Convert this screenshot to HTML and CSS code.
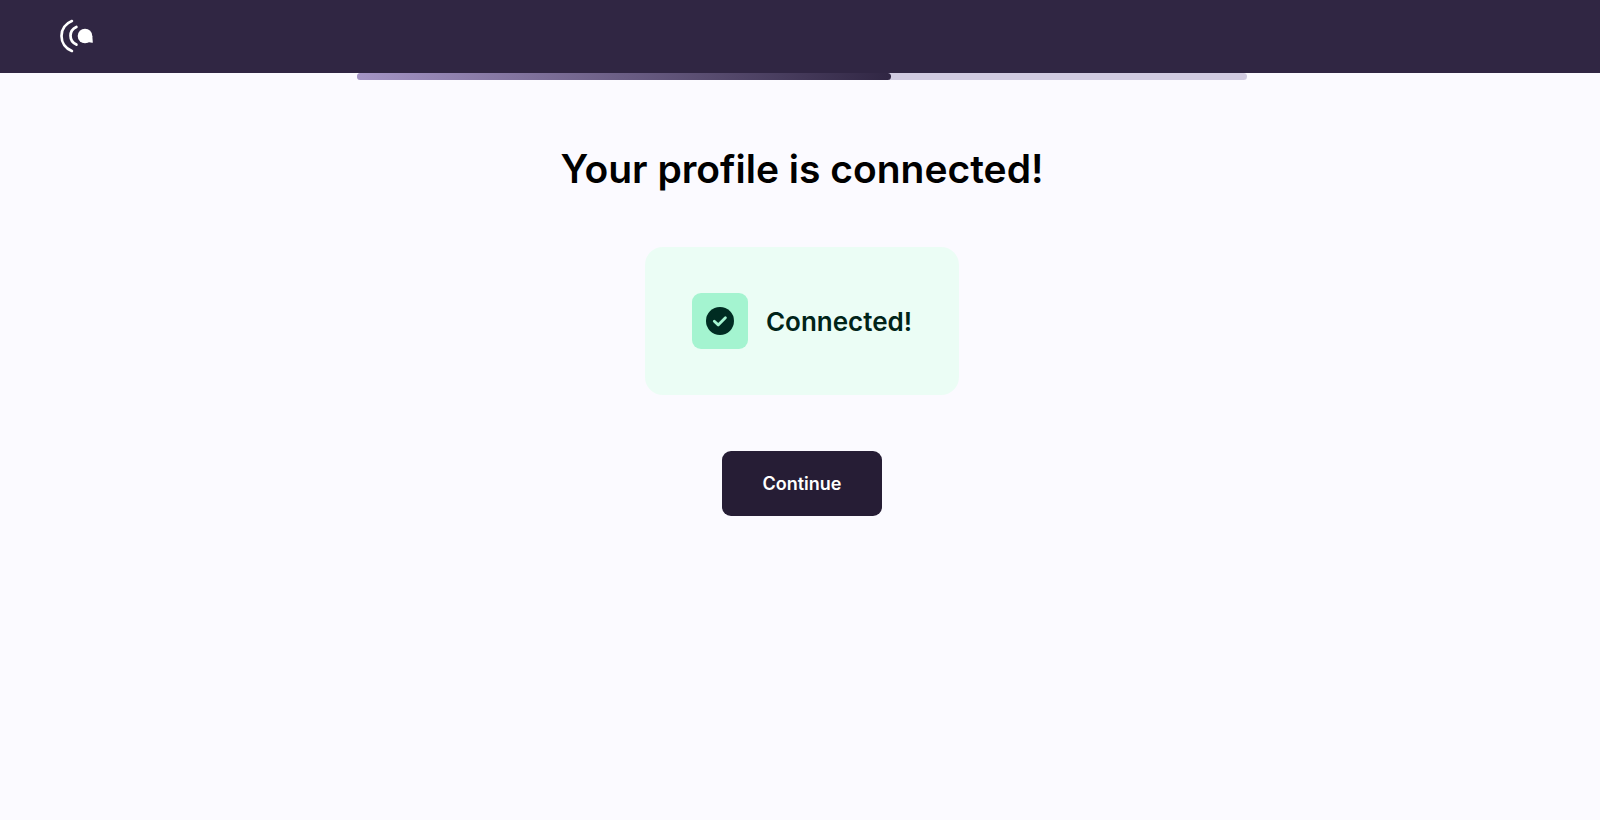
FILE: index.html
```html
<!DOCTYPE html>
<html lang="en">
<head>
<meta charset="utf-8">
<meta name="viewport" content="width=device-width, initial-scale=1">
<title>Your profile is connected!</title>
<link rel="stylesheet" href="styles.css">
</head>
<body>
<header class="topbar">
  <svg class="logo" viewBox="0 0 34 34" role="img" aria-label="Home">
    <path class="logo-wave" d="M11.900 2.100C5.600 4.500 1.500 10.200 1.500 17s4.100 12.500 10.400 14.900"/>
    <path class="logo-wave" d="M16.400 8C12.800 9.600 10.500 13 10.500 16.800s2.300 7.200 5.900 8.800"/>
    <circle class="logo-dot" cx="25" cy="17" r="7.300"/>
    <path class="logo-dot" d="M25 17h7.300l.5 6.300q0 .7-.700.500l-4.500-.900z"/>
  </svg>
</header>
<main class="page">
  <div class="progress" role="progressbar" aria-label="Setup progress" aria-valuemin="0" aria-valuemax="100" aria-valuenow="60">
    <div class="progress-fill" style="width: 60%"></div>
  </div>
  <h1 class="title">Your profile is connected!</h1>
  <section class="status">
    <span class="status-badge">
      <svg class="check" viewBox="0 0 28 28" aria-hidden="true">
        <circle class="check-disc" cx="14" cy="14" r="14"/>
        <path class="check-mark" d="M8.300 14.300l3.900 3.600 7.200-7.200"/>
      </svg>
    </span>
    <span class="status-text">Connected!</span>
  </section>
  <button class="continue" type="button">Continue</button>
</main>
</body>
</html>
```
FILE: styles.css
```css
* {
  box-sizing: border-box;
}

body {
  margin: 0;
  min-height: 100vh;
  background: #fbfaff;
  color: #000;
  font-family: Inter, "Liberation Sans", sans-serif;
}

.topbar {
  display: flex;
  align-items: center;
  height: 73px;
  padding: 0 60px 1px;
  background: #302643;
}

.logo {
  width: 34px;
  height: 34px;
}

.logo-wave {
  fill: none;
  stroke: #fff;
  stroke-width: 2.7;
  stroke-linecap: round;
}

.logo-dot {
  fill: #fff;
}

.page {
  display: flex;
  flex-direction: column;
  align-items: center;
  padding: 0 16px 48px 20px;
}

.progress {
  width: 100%;
  max-width: 890px;
  height: 7px;
  border-radius: 4px;
  background: #d1cbe1;
}

.progress-fill {
  height: 100%;
  border-radius: 4px;
  background: linear-gradient(90deg, #a595c6, #302643);
}

.title {
  margin: 64px 0 54px;
  font-size: 39px;
  font-weight: 600;
  line-height: 49px;
  text-align: center;
}

.status {
  display: flex;
  align-items: center;
  gap: 18px;
  padding: 46px 47px;
  border-radius: 18px;
  background: #ebfdf5;
}

.status-badge {
  display: flex;
  align-items: center;
  justify-content: center;
  width: 56px;
  height: 56px;
  border-radius: 9px;
  background: #a4f4d0;
}

.check {
  width: 28px;
  height: 28px;
}

.check-disc {
  fill: #002c22;
}

.check-mark {
  fill: none;
  stroke: #a4f4d0;
  stroke-width: 2.8;
  stroke-linecap: round;
  stroke-linejoin: round;
}

.status-text {
  padding-top: 2px;
  color: #002418;
  font-size: 26px;
  font-weight: 600;
  line-height: 36px;
}

.continue {
  margin-top: 56px;
  padding: 18px 41px;
  border: 0;
  border-radius: 9px;
  background: #261d35;
  color: #fff;
  font-family: inherit;
  font-size: 18px;
  font-weight: 600;
  line-height: 29px;
  cursor: pointer;
}
```
